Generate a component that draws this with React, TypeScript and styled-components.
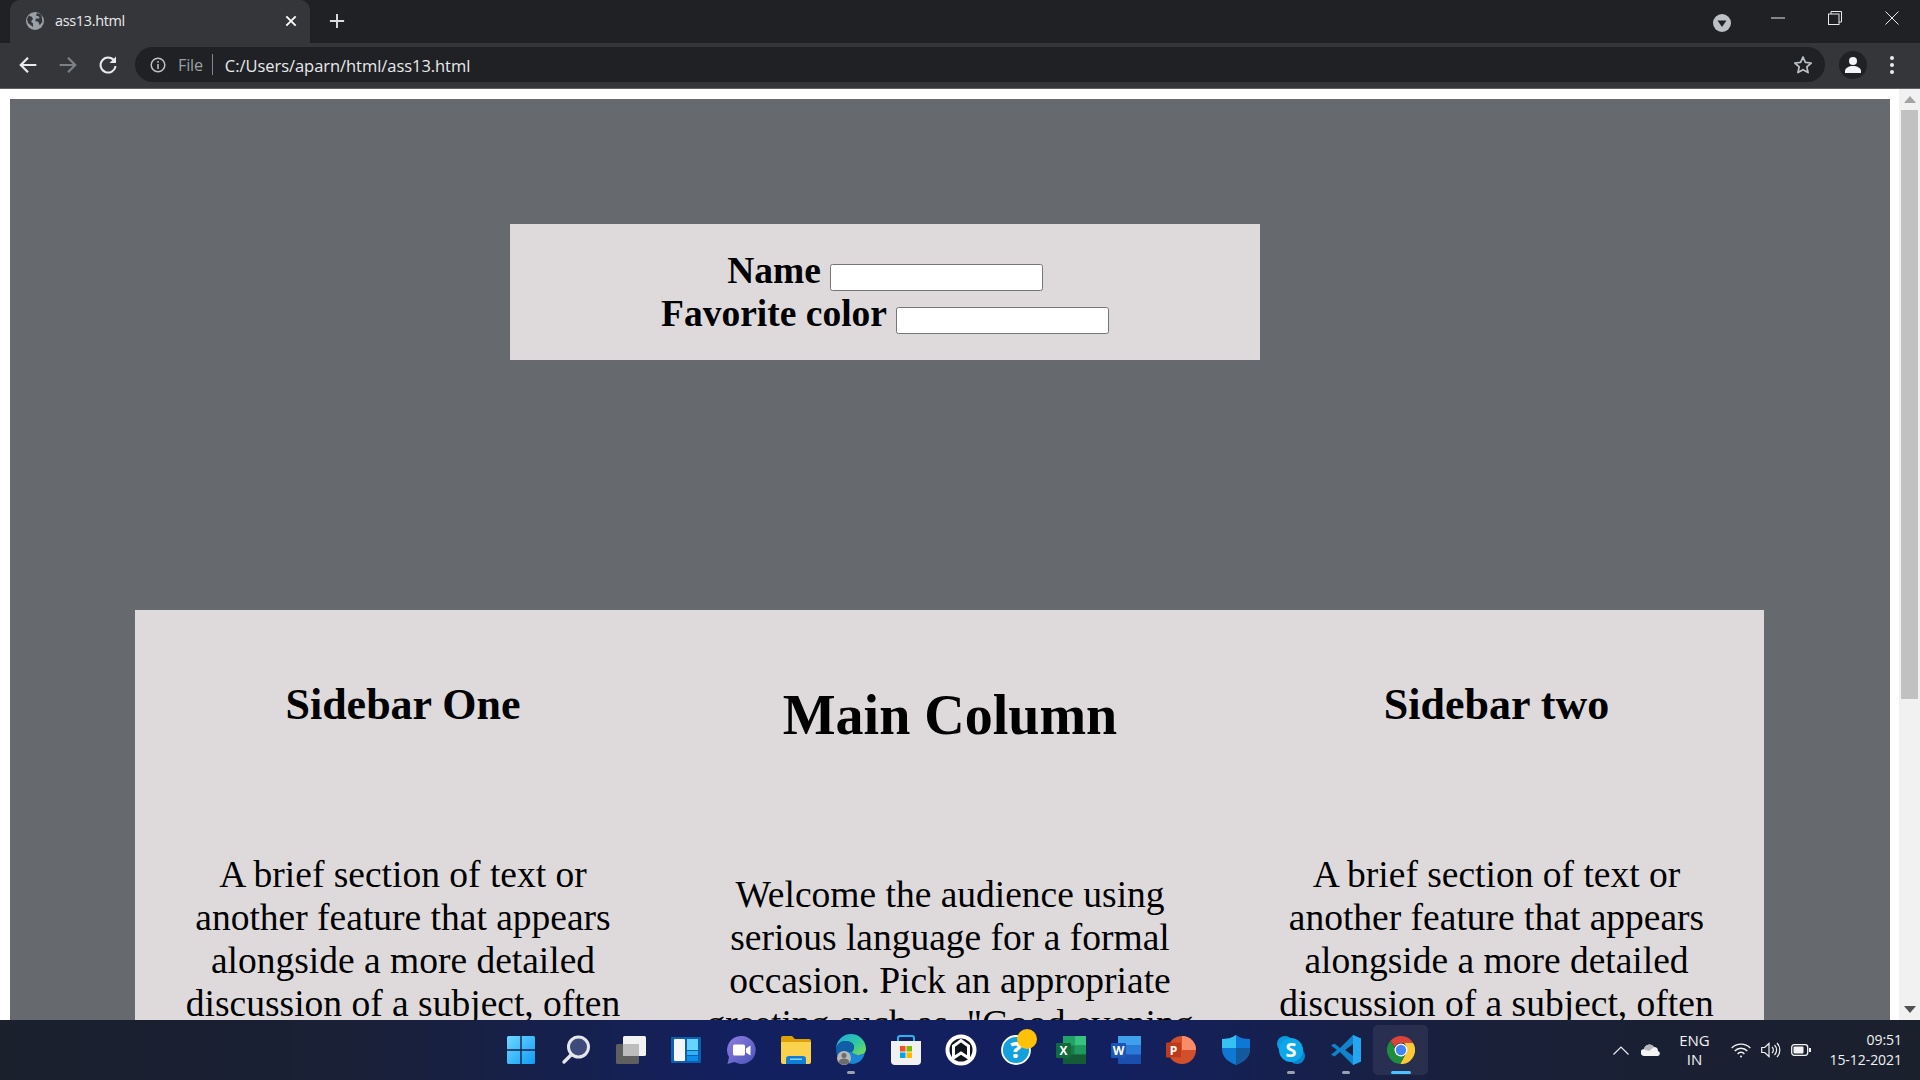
import React from "react";
import styled, { createGlobalStyle } from "styled-components";

const Global = createGlobalStyle`
  html, body { margin: 0; padding: 0; width: 1920px; height: 1080px; overflow: hidden; background: #fff; }
  * { box-sizing: border-box; }
`;

const Screen = styled.div`
  width: 1920px; height: 1080px; display: flex; flex-direction: column; overflow: hidden;
`;

const TabStrip = styled.div`
  height: 43px; flex: none; background: #202124; display: flex; align-items: stretch; padding-left: 10px;
`;
const Tab = styled.div`
  width: 300px; background: #35363a; border-radius: 10px 10px 0 0; display: flex; align-items: center;
  padding: 0 12px 2px 16px; color: #e8eaed; font: 14.5px "Open Sans", sans-serif; letter-spacing: -0.35px;
`;
const TabTitle = styled.span`
  flex: 1; margin-left: 11px;
`;
const NewTab = styled.div`
  width: 26px; margin-left: 14px; display: flex; align-items: center; justify-content: center; padding-bottom: 2px;
`;
const StripSpacer = styled.div` flex: 1; `;
const ProfileDrop = styled.div`
  width: 44px; display: flex; align-items: center; justify-content: center; padding-top: 2px; margin-right: 5px;
`;
const WinButton = styled.div`
  width: 57px; height: 36px; display: flex; align-items: center; justify-content: center;
`;
const WinControls = styled.div` display: flex; padding-right: 0; `;

const Toolbar = styled.div`
  height: 46px; flex: none; background: #35363a; border-bottom: 1px solid #5f6368; display: flex; align-items: center; padding: 0 0 2px 8px;
`;
const NavButton = styled.div`
  width: 40px; height: 34px; display: flex; align-items: center; justify-content: center;
`;
const Omnibox = styled.div`
  margin-left: 7px; width: 1690px; height: 35px; border-radius: 18px; background: #202124; display: flex; align-items: center;
  padding: 0 12px 0 15px; font: 16.5px "Open Sans", sans-serif; letter-spacing: -0.05px;
`;
const Scheme = styled.span` color: #9aa0a6; margin-left: 12px; font-size: 16.2px; letter-spacing: -0.2px; `;
const Divider = styled.span` width: 1px; height: 21px; background: #80868b; margin: 0 12px 0 9px; `;
const Url = styled.span` color: #e8eaed; flex: 1; padding-top: 1px; `;
const Avatar = styled.div`
  width: 28px; height: 28px; margin-left: 14px; border-radius: 50%; background: #202124; display: flex; align-items: center; justify-content: center;
`;
const MenuDots = styled.div`
  width: 40px; display: flex; align-items: center; justify-content: center; margin-left: 5px;
`;

const Viewport = styled.div`
  flex: 1; min-height: 0; display: flex; background: #fff; overflow: hidden;
`;
const Page = styled.div`
  flex: 1; min-width: 0; padding: 10px 9px 0 10px; overflow: hidden; font-family: "Liberation Serif", "Times New Roman", serif; color: #000;
`;
const Body = styled.div`
  background: #666a6f; padding: 125px 0 0; height: 1400px;
`;
const FormBox = styled.form`
  width: 750px; height: 136px; margin-left: 500px; background: #dedadc; padding-top: 25px; text-align: center;
  font-size: 37.5px; font-weight: bold; line-height: 43px;
`;
const FormRow = styled.div` height: 43px; `;
const TextInput = styled.input`
  width: 213px; height: 27px; margin-left: 9px; border: 1px solid #767676; border-radius: 2.5px; background: #fff; vertical-align: 1px; padding: 0;
`;
const Columns = styled.div`
  width: 1629px; margin: 250px 0 0 125px; background: #dedadc; display: grid; grid-template-columns: 536px 558px 535px; text-align: center;
`;
const Side = styled.section` padding: 50px 40px 0; `;
const Main = styled.section` padding: 50px 20px 0; `;
const SideTitle = styled.h2`
  margin: 0; font-size: 44px; line-height: 52px; font-weight: bold; padding-top: 19px;
`;
const MainTitle = styled.h1`
  margin: 0; font-size: 56px; line-height: 64px; font-weight: bold; padding-top: 23px;
`;
const Para = styled.p<{ $top: number }>`
  margin: ${p => p.$top}px 0 0; font-size: 37.5px; line-height: 43px;
`;

const Scrollbar = styled.div`
  width: 21px; flex: none; background: #f1f1f1; display: flex; flex-direction: column; align-items: center;
`;
const ScrollArrow = styled.div`
  height: 21px; flex: none; display: flex; align-items: center; justify-content: center;
`;
const ScrollTrack = styled.div` flex: 1; width: 100%; padding: 0 2px; `;
const ScrollThumb = styled.div` height: 589px; background: #c1c1c1; `;

const Taskbar = styled.footer`
  height: 60px; flex: none; display: grid; grid-template-columns: 1fr auto 1fr; align-items: center;
  background: linear-gradient(90deg, #1a202c 0%, #1a2036 18%, #13205f 38%, #13205f 58%, #1a2038 78%, #1a202c 100%);
  color: #f2f2f2; font: 14px "Open Sans", sans-serif;
`;
const TaskIcons = styled.div` grid-column: 2; display: flex; margin-left: 1px; `;
const TaskSlot = styled.div<{ $active?: boolean }>`
  position: relative; width: 55px; height: 50px; display: flex; align-items: center; justify-content: center;
  border-radius: 5px; background: ${p => (p.$active ? "rgba(255,255,255,.07)" : "transparent")};
`;
const RunDot = styled.span<{ $active?: boolean }>`
  position: absolute; bottom: 1px; left: 50%; transform: translateX(-50%); height: 3px; border-radius: 2px;
  width: ${p => (p.$active ? "20px" : "8px")}; background: ${p => (p.$active ? "#4cc2ff" : "#9aa0ad")};
`;
const Tray = styled.div` grid-column: 3; display: flex; align-items: center; justify-content: flex-end; padding-right: 18px; `;
const TrayIcon = styled.div<{ $w: number }>`
  width: ${p => p.$w}px; display: flex; align-items: center; justify-content: center;
`;
const Lang = styled.div` text-align: center; line-height: 19px; width: 40px; margin: 0 12px 0 8px; font-size: 15px; `;
const Clock = styled.div` text-align: right; line-height: 20px; margin-left: 13px; letter-spacing: -0.05px; `;

const Globe = () => (
  <svg width="18" height="18" viewBox="0 0 18 18">
    <circle cx="9" cy="9" r="9" fill="#9aa0a6" />
    <path d="M3 3.5l3 1.5 1 2-2 2.5 2 2v3.5L2 11 1 7zM11 1l-1 2.5 3 1 .5 2H10l-.8 2.5 3 .8 1.6 3.5 2.6-3.5-1-7z" fill="#35363a" />
  </svg>
);

const Line = ({ d, c = "#e8eaed", w = 2, s = 18 }: { d: string; c?: string; w?: number; s?: number }) => (
  <svg width={s} height={s} viewBox="0 0 18 18" fill="none" stroke={c} strokeWidth={w}><path d={d} /></svg>
);

const WinLogo = () => (
  <svg width="30" height="30" viewBox="0 0 30 30">
    <defs><linearGradient id="w" x1="0" y1="0" x2="1" y2="1"><stop offset="0" stopColor="#6fd8ff" /><stop offset="1" stopColor="#0f9cf5" /></linearGradient></defs>
    <path d="M1 2.5A1.5 1.5 0 0 1 2.5 1H14.3v13.3H1zM15.7 1h11.8A1.5 1.5 0 0 1 29 2.5v11.8H15.7zM1 15.7h13.3V29H2.5A1.5 1.5 0 0 1 1 27.5zM15.7 15.7H29v11.8a1.5 1.5 0 0 1-1.5 1.5H15.7z" fill="url(#w)" />
  </svg>
);
const SearchIcon = () => (
  <svg width="30" height="30" viewBox="0 0 30 30">
    <circle cx="17.5" cy="12" r="10" fill="#3f4a7c" stroke="#e4e6ea" strokeWidth="3" />
    <path d="M10 20l-7 7" stroke="#e4e6ea" strokeWidth="3.4" strokeLinecap="round" />
  </svg>
);
const TaskView = () => (
  <svg width="30" height="28" viewBox="0 0 30 28">
    <rect x="0" y="8" width="23" height="20" rx="1.5" fill="#5f5f5f" />
    <rect x="7" y="0" width="23" height="20" rx="1.5" fill="#f2f2f2" />
    <rect x="7" y="8" width="16" height="12" fill="#bdbdbd" />
  </svg>
);
const Widgets = () => (
  <svg width="30" height="26" viewBox="0 0 30 26">
    <rect width="30" height="26" rx="1" fill="#0f5fae" />
    <rect x="3" y="2" width="11" height="22" rx="1" fill="#f5f6f8" />
    <rect x="16" y="2" width="11" height="11" fill="#66d4ff" />
    <rect x="16" y="14" width="11" height="4" fill="#2db2f5" />
    <rect x="16" y="19" width="11" height="5" fill="#0c8de8" />
  </svg>
);
const Chat = () => (
  <svg width="30" height="30" viewBox="0 0 30 30">
    <defs><linearGradient id="c" x1="0" y1="0" x2="1" y2="1"><stop offset="0" stopColor="#8f7ee0" /><stop offset="1" stopColor="#4a54b8" /></linearGradient></defs>
    <path d="M15.5 1a14 14 0 1 1-7 26L1.5 29 3 22A14 14 0 0 1 15.5 1z" fill="url(#c)" />
    <rect x="7" y="9.5" width="12" height="11" rx="1.5" fill="#fff" />
    <path d="M20 13.5l4.5-3v10l-4.500-3z" fill="#fff" />
  </svg>
);
const Explorer = () => (
  <svg width="30" height="28" viewBox="0 0 30 28">
    <path d="M0 2a2 2 0 0 1 2-2h9l3 3h14a2 2 0 0 1 2 2v3H0z" fill="#e0a008" />
    <path d="M0 6h30v20a2 2 0 0 1-2 2H2a2 2 0 0 1-2-2z" fill="#fbd24e" />
    <path d="M5 28v-5a3 3 0 0 1 3-3h14a3 3 0 0 1 3 3v5z" fill="#0f7fd6" />
    <rect x="9" y="22.500" width="12" height="1.500" fill="#8ed0f5" />
  </svg>
);
const Edge = () => (
  <svg width="32" height="32" viewBox="0 0 32 32">
    <defs>
      <linearGradient id="e1" x1="0" y1="0" x2="1" y2="1"><stop offset="0" stopColor="#1fa8e8" /><stop offset=".55" stopColor="#2fc8a0" /><stop offset="1" stopColor="#7fdc50" /></linearGradient>
    </defs>
    <path d="M1 15A15 15 0 0 1 31 15c0 3-2 6-7 6-4 0-7-1.500-7-3 0-1 2-2 2-5 0-4-5-6-9-6C6 7 2 10 1 15z" fill="url(#e1)" />
    <path d="M1 15c1-5 5-8 9-8 5 0 9 2 9 6 0 3-2 4-2 5-6-1-11 0-11 5 0 4 3 7 8 8C7 31 1 24 1 15z" fill="#0f5fa8" />
    <path d="M17 18c0 1.500 3 3 7 3 3 0 5-1 6-3-1 7-6 12-13 12-5-1-9-4-9-8 0-5 3-5 9-4z" fill="#1b86d6" />
    <circle cx="9" cy="24" r="7" fill="#b8b8b8" />
    <circle cx="9" cy="21.500" r="2.500" fill="#6c6c6c" />
    <path d="M3.500 28c1-3 3-3.500 5.500-3.500s4.500.5 5.500 3.500a7 7 0 0 1-11 0z" fill="#6c6c6c" />
  </svg>
);
const Store = () => (
  <svg width="30" height="30" viewBox="0 0 30 30">
    <path d="M7 6V3a2 2 0 0 1 2-2h12a2 2 0 0 1 2 2v3" fill="none" stroke="#28b4f0" strokeWidth="2" />
    <path d="M0 6h30v20a4 4 0 0 1-4 4H4a4 4 0 0 1-4-4z" fill="#f1f1f1" />
    <rect x="9" y="11" width="5.500" height="5.500" fill="#f25022" />
    <rect x="15.500" y="11" width="5.500" height="5.500" fill="#7fba00" />
    <rect x="9" y="17.500" width="5.500" height="5.500" fill="#00a4ef" />
    <rect x="15.500" y="17.500" width="5.500" height="5.500" fill="#ffb900" />
  </svg>
);
const Bookmark = () => (
  <svg width="32" height="32" viewBox="0 0 32 32">
    <circle cx="16" cy="16" r="13.500" fill="#10151f" stroke="#fff" strokeWidth="4" />
    <path d="M8.500 24V12L16 6.500 23.500 12v12L16 19z" fill="none" stroke="#fff" strokeWidth="3" />
  </svg>
);
const Help = () => (
  <svg width="50" height="50" viewBox="0 0 50 50">
    <circle cx="25" cy="25" r="14" fill="#13a0dc" stroke="#fff" strokeWidth="1.800" />
    <text x="25" y="33" textAnchor="middle" fontFamily="Open Sans, sans-serif" fontWeight="800" fontSize="23" fill="#fff">?</text>
    <circle cx="36" cy="14" r="10" fill="#ffc107" />
  </svg>
);
const Excel = () => (
  <svg width="30" height="28" viewBox="0 0 30 28">
    <rect x="7" width="23" height="28" rx="1" fill="#1b7a47" />
    <rect x="18.500" width="11.500" height="9.500" fill="#37c27f" />
    <rect x="7" width="11.500" height="9.500" fill="#22a366" />
    <rect x="18.500" y="9.500" width="11.500" height="9" fill="#1f9a5e" />
    <rect x="7" y="18.500" width="23" height="9.500" fill="#145c36" />
    <rect y="7" width="15" height="15" rx="1" fill="#0f6b3b" />
    <text x="7.500" y="19" textAnchor="middle" fontFamily="Open Sans, sans-serif" fontWeight="700" fontSize="12" fill="#fff">X</text>
  </svg>
);
const Word = () => (
  <svg width="30" height="28" viewBox="0 0 30 28">
    <rect x="7" width="23" height="28" rx="1" fill="#1a4fae" />
    <rect x="7" width="23" height="9.500" fill="#41a0ec" />
    <rect x="7" y="9.500" width="23" height="9" fill="#2a7bd8" />
    <rect y="7" width="15" height="15" rx="1" fill="#1a55b8" />
    <text x="7.500" y="19" textAnchor="middle" fontFamily="Open Sans, sans-serif" fontWeight="700" fontSize="12" fill="#fff">W</text>
  </svg>
);
const Ppt = () => (
  <svg width="30" height="28" viewBox="0 0 30 28">
    <circle cx="16" cy="14" r="14" fill="#d24f2c" />
    <path d="M16 0a14 14 0 0 1 14 14H16z" fill="#fb8c68" />
    <rect y="6.500" width="15" height="15" rx="1" fill="#bf3a1a" />
    <text x="7.500" y="18.500" textAnchor="middle" fontFamily="Open Sans, sans-serif" fontWeight="700" fontSize="12" fill="#fff">P</text>
  </svg>
);
const Shield = () => (
  <svg width="28" height="30" viewBox="0 0 28 30">
    <path d="M14 0c4 3 9 4 14 4v10c0 8-6 13-14 16C6 27 0 22 0 14V4c5 0 10-1 14-4z" fill="#0f78d4" />
    <path d="M14 0c-4 3-9 4-14 4v9h14z" fill="#35c1f1" />
    <path d="M14 13h14v1c0 8-6 13-14 16z" fill="#125a9c" />
  </svg>
);
const Skype = () => (
  <svg width="28" height="28" viewBox="0 0 28 28">
    <circle cx="8" cy="8" r="8" fill="#0a9be0" />
    <circle cx="20" cy="20" r="8" fill="#0a86d0" />
    <circle cx="14" cy="14" r="12" fill="#0ca8ea" />
    <text x="14" y="21" textAnchor="middle" fontFamily="Open Sans, sans-serif" fontWeight="700" fontSize="20" fill="#fff">S</text>
  </svg>
);
const VsCode = () => (
  <svg width="30" height="30" viewBox="0 0 30 30">
    <path d="M22 0l8 3.500v23L22 30 9 17l-5.500 4.500L0 19.500 6 15 0 10.500l3.500-2L9 13z" fill="#0f83cc" />
    <path d="M22 0l8 3.500v23L22 30V21l-8-6 8-6z" fill="#24a6f0" />
    <path d="M22 9l-8 6 8 6z" fill="#151f3f" />
  </svg>
);
const ChromeLogo = () => (
  <svg width="28" height="28" viewBox="0 0 28 28">
    <path d="M14 0a14 14 0 0 1 12.100 7H14a7 7 0 0 0-6.300 4L3.500 4.800A14 14 0 0 1 14 0z" fill="#db4437" />
    <path d="M26.100 7A14 14 0 0 1 13 28l6-10.500A7 7 0 0 0 19 10a7 7 0 0 0-2-3z" fill="#fcc934" />
    <path d="M3.500 4.800L9 14a7 7 0 0 0 9 4.500L13.500 28A14 14 0 0 1 3.500 4.800z" fill="#1e8e3e" />
    <circle cx="14" cy="14" r="6.500" fill="#fff" />
    <circle cx="14" cy="14" r="5.200" fill="#4285f4" />
  </svg>
);

const apps: [React.ReactNode, string?][] = [
  [<WinLogo />], [<SearchIcon />], [<TaskView />], [<Widgets />], [<Chat />], [<Explorer />], [<Edge />, "run"], [<Store />], [<Bookmark />],
  [<Help />], [<Excel />], [<Word />], [<Ppt />], [<Shield />], [<Skype />, "run"], [<VsCode />, "run"], [<ChromeLogo />, "active"],
];

export default function App() {
  return (
    <Screen>
      <Global />
      <TabStrip>
        <Tab>
          <Globe />
          <TabTitle>ass13.html</TabTitle>
          <Line s={14} w={2.4} c="#fff" d="M3 3l12 12M15 3L3 15" />
        </Tab>
        <NewTab><Line s={16} c="#dadce0" w={2.2} d="M9 1v16M1 9h16" /></NewTab>
        <StripSpacer />
        <ProfileDrop>
          <svg width="18" height="18" viewBox="0 0 18 18"><circle cx="9" cy="9" r="9" fill="#bdc1c6" /><path d="M4.500 6.500h9L9 13z" fill="#202124" /></svg>
        </ProfileDrop>
        <WinControls>
          <WinButton><svg width="14" height="2" viewBox="0 0 14 2"><path d="M0 1h14" stroke="#e8eaed" strokeWidth="1" /></svg></WinButton>
          <WinButton><svg width="14" height="14" viewBox="0 0 14 14" fill="none" stroke="#e8eaed"><rect x=".5" y="3" width="10.500" height="10.500" /><path d="M3 3V.5h10.500V11H11" /></svg></WinButton>
          <WinButton><svg width="14" height="14" viewBox="0 0 14 14" fill="none" stroke="#e8eaed"><path d="M.5.5l13 13M13.500.5l-13 13" /></svg></WinButton>
        </WinControls>
      </TabStrip>
      <Toolbar>
        <NavButton><Line s={20} c="#e8eaed" d="M16.500 9H2.500M9 2.500L2.500 9 9 15.500" /></NavButton>
        <NavButton><Line s={20} c="#7d8084" d="M1.500 9h14M9 2.500L15.500 9 9 15.500" /></NavButton>
        <NavButton>
          <svg width="20" height="20" viewBox="0 0 20 20" fill="none"><path d="M16 5.500A7.500 7.500 0 1 0 17.500 11" stroke="#e8eaed" strokeWidth="2" /><path d="M18 1.500V8h-6.500z" fill="#e8eaed" /></svg>
        </NavButton>
        <Omnibox>
          <svg width="16" height="16" viewBox="0 0 16 16" fill="none"><circle cx="8" cy="8" r="6.800" stroke="#bdc1c6" strokeWidth="1.500" /><path d="M8 7v5M8 4v1.700" stroke="#bdc1c6" strokeWidth="1.500" /></svg>
          <Scheme>File</Scheme>
          <Divider />
          <Url>C:/Users/aparn/html/ass13.html</Url>
          <svg width="20" height="20" viewBox="0 0 20 20" fill="none"><path d="M10 2l2.400 5.400 5.800.6-4.400 3.900 1.300 5.700L10 14.700l-5.100 2.900 1.300-5.700L1.800 8l5.800-.6z" stroke="#bdc1c6" strokeWidth="1.700" strokeLinejoin="round" /></svg>
        </Omnibox>
        <Avatar>
          <svg width="18" height="18" viewBox="0 0 18 18" fill="#f1f3f4"><circle cx="9" cy="5" r="4" /><path d="M1 17v-2c0-3 4-5 8-5s8 2 8 5v2z" /></svg>
        </Avatar>
        <MenuDots>
          <svg width="4" height="18" viewBox="0 0 4 18" fill="#e8eaed"><circle cx="2" cy="2" r="2" /><circle cx="2" cy="9" r="2" /><circle cx="2" cy="16" r="2" /></svg>
        </MenuDots>
      </Toolbar>
      <Viewport>
        <Page>
          <Body>
            <FormBox>
              <FormRow>Name<TextInput /></FormRow>
              <FormRow>Favorite color<TextInput /></FormRow>
            </FormBox>
            <Columns>
              <Side>
                <SideTitle>Sidebar One</SideTitle>
                <Para $top={122}>A brief section of text or another feature that appears alongside a more detailed discussion of a subject, often</Para>
              </Side>
              <Main>
                <MainTitle>Main Column</MainTitle>
                <Para $top={126}>Welcome the audience using serious language for a formal occasion. Pick an appropriate greeting such as, "Good evening</Para>
              </Main>
              <Side>
                <SideTitle>Sidebar two</SideTitle>
                <Para $top={122}>A brief section of text or another feature that appears alongside a more detailed discussion of a subject, often</Para>
              </Side>
            </Columns>
          </Body>
        </Page>
        <Scrollbar>
          <ScrollArrow><svg width="12" height="7" viewBox="0 0 12 7"><path d="M6 0l6 7H0z" fill="#a3a3a3" /></svg></ScrollArrow>
          <ScrollTrack><ScrollThumb /></ScrollTrack>
          <ScrollArrow><svg width="12" height="7" viewBox="0 0 12 7"><path d="M0 0h12L6 7z" fill="#505050" /></svg></ScrollArrow>
        </Scrollbar>
      </Viewport>
      <Taskbar>
        <TaskIcons>
          {apps.map(([icon, state], i) => (
            <TaskSlot key={i} $active={state === "active"}>
              {icon}
              {state && <RunDot $active={state === "active"} />}
            </TaskSlot>
          ))}
        </TaskIcons>
        <Tray>
          <TrayIcon $w={30}><svg width="16" height="9" viewBox="0 0 16 9" fill="none" stroke="#eee" strokeWidth="1.200"><path d="M.5 8.500L8 1l7.500 7.500" /></svg></TrayIcon>
          <TrayIcon $w={30}>
            <svg width="20" height="12" viewBox="0 0 20 12"><path d="M3.500 12A3.500 3.500 0 0 1 3 5a5.500 5.500 0 0 1 10-2 4 4 0 0 1 4 4 2.600 2.600 0 0 1 0 5z" fill="#f4f4f4" /><path d="M3 5.500a5.500 5.500 0 0 1 10-2.500L8 7z" fill="#b5b7bd" /></svg>
          </TrayIcon>
          <Lang>ENG<br />IN</Lang>
          <TrayIcon $w={30}>
            <svg width="20" height="15" viewBox="0 0 20 15" fill="none" stroke="#f2f2f2" strokeWidth="1.400"><path d="M.7 5a13 13 0 0 1 18.600 0M3.700 8a8.500 8.500 0 0 1 12.600 0M6.700 11a4 4 0 0 1 6.600 0" /><circle cx="10" cy="13.500" r="1" fill="#f2f2f2" stroke="none" /></svg>
          </TrayIcon>
          <TrayIcon $w={30}>
            <svg width="20" height="16" viewBox="0 0 20 16" fill="none" stroke="#f2f2f2" strokeWidth="1.200"><path d="M.7 5.500h3L8 1.500v13l-4.300-4h-3zM11 5a4 4 0 0 1 0 6M13.500 3a7 7 0 0 1 0 10M16 1a10 10 0 0 1 0 14" /></svg>
          </TrayIcon>
          <TrayIcon $w={30}>
            <svg width="20" height="12" viewBox="0 0 20 12"><rect x=".7" y=".7" width="16" height="10.600" rx="2.500" fill="none" stroke="#f2f2f2" strokeWidth="1.300" /><rect x="2.500" y="2.500" width="10" height="7" rx="1" fill="#f2f2f2" /><rect x="18" y="4" width="2" height="4" fill="#f2f2f2" /></svg>
          </TrayIcon>
          <Clock>09:51<br />15-12-2021</Clock>
        </Tray>
      </Taskbar>
    </Screen>
  );
}
